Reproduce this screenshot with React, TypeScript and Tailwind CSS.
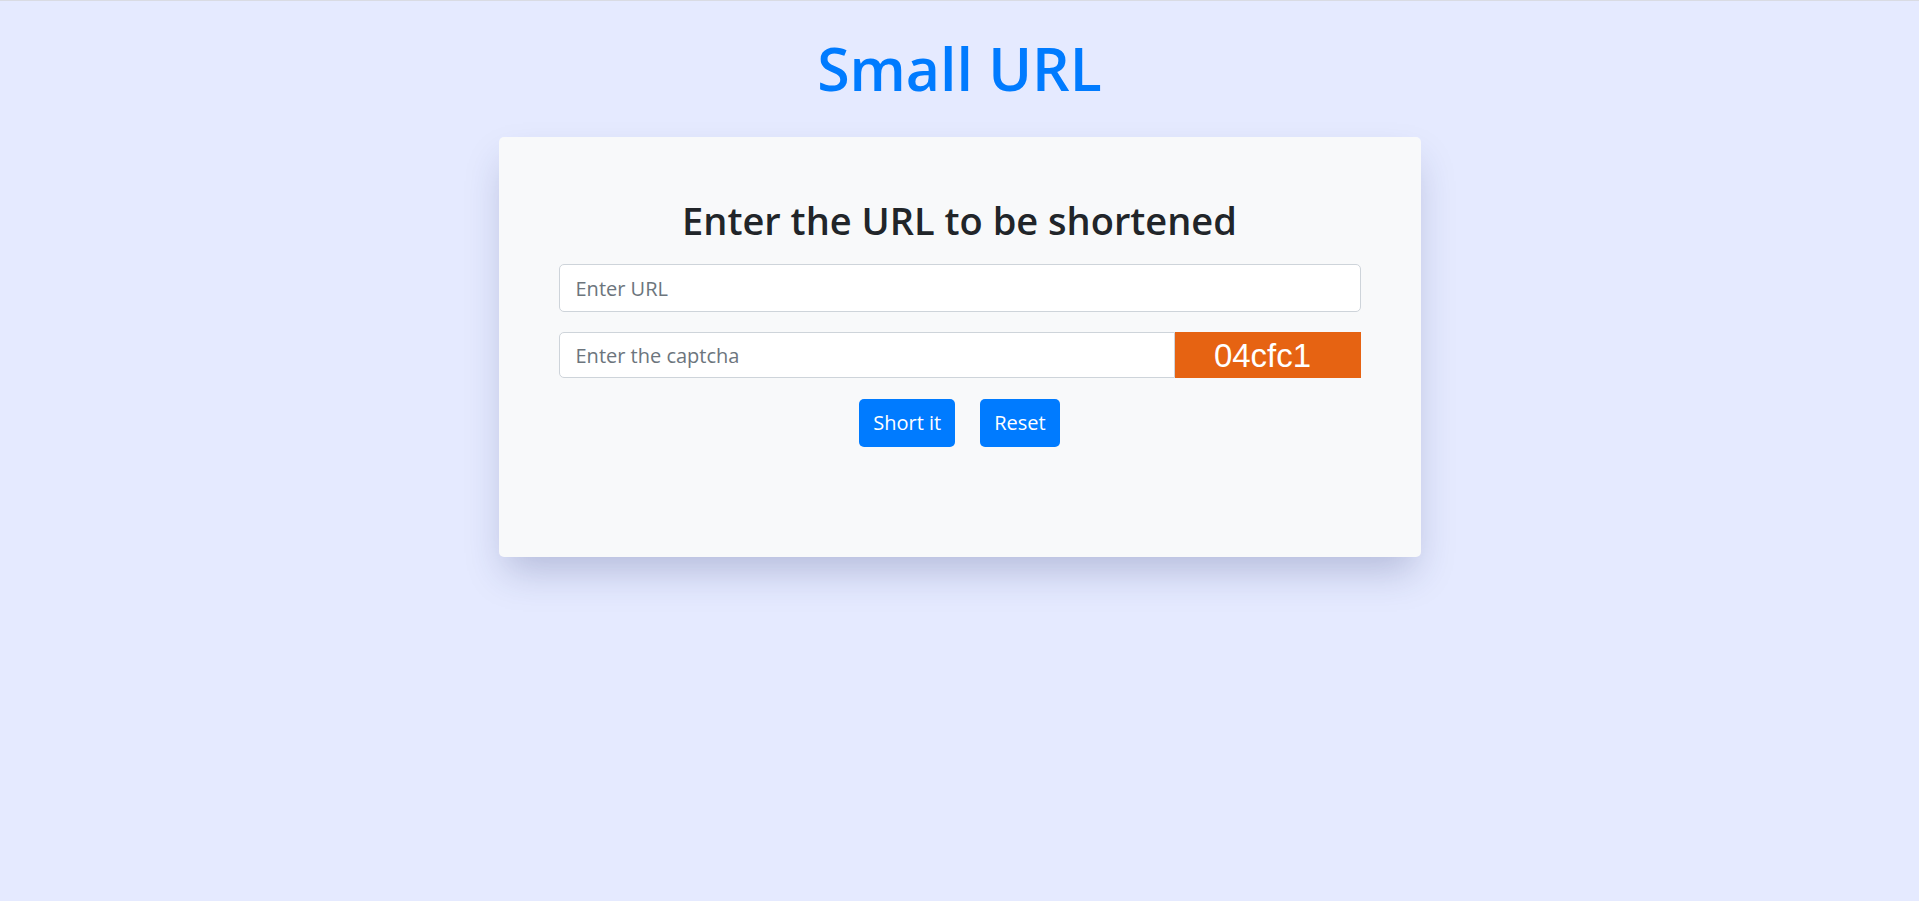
import React, { useState } from "react";

const captcha = "04cfc1";

const App = () => {
  const [url, setUrl] = useState("");
  const [code, setCode] = useState("");

  return (
    <div className="min-h-screen bg-[#e5eaff] border-t border-[#d9dbe3] font-['Open_Sans',sans-serif]">
      {/* Title */}
      <h1 className="pt-[32px] text-center text-[59px] leading-[1.2] font-semibold text-[#007bff]">
        Small URL
      </h1>

      {/* Card */}
      <div className="mx-auto mt-[33px] w-[922px] rounded-[5px] bg-[#f8f9fa] px-[60px] pt-[61px] pb-[110px] shadow-[0_20px_36px_-6px_rgba(40,50,110,0.25)]">
        <h2 className="mb-[21px] text-center text-[38px] leading-[1.2] font-semibold text-[#212529]">
          Enter the URL to be shortened
        </h2>

        <input
          type="text"
          value={url}
          onChange={(e) => setUrl(e.target.value)}
          placeholder="Enter URL"
          className="block h-[48px] w-full rounded-[5px] border border-[#ced4da] bg-white px-[16px] text-[20px] text-[#495057] placeholder:text-[#6c757d] outline-none"
        />

        <div className="mt-[20px] flex h-[46px]">
          <input
            type="text"
            value={code}
            onChange={(e) => setCode(e.target.value)}
            placeholder="Enter the captcha"
            className="h-full flex-1 rounded-l-[5px] border border-[#ced4da] bg-white px-[16px] text-[20px] text-[#495057] placeholder:text-[#6c757d] outline-none"
          />
          <div className="flex h-full w-[186px] items-center justify-center bg-[#e66312] pr-[10px] font-['Liberation_Sans',Arial,sans-serif] text-[33px] text-white">
            {captcha}
          </div>
        </div>

        <div className="mt-[21px] flex justify-center gap-[25px]">
          <button className="h-[48px] rounded-[5px] bg-[#007bff] px-[14px] text-[20px] text-white">
            Short it
          </button>
          <button
            className="h-[48px] rounded-[5px] bg-[#007bff] px-[14px] text-[20px] text-white"
            onClick={() => {
              setUrl("");
              setCode("");
            }}
          >
            Reset
          </button>
        </div>
      </div>
    </div>
  );
};

export default App;
